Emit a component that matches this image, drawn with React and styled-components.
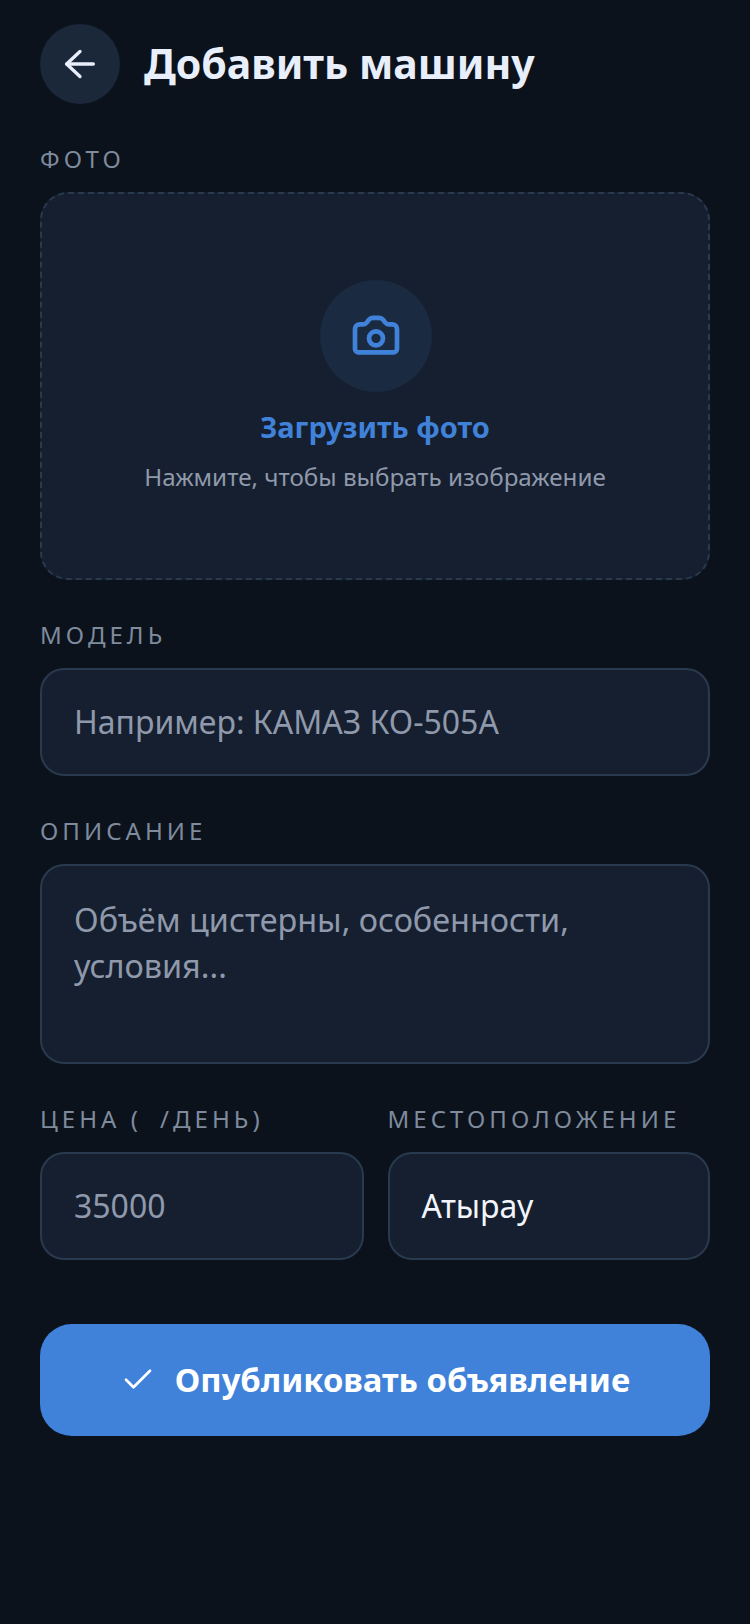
import React from "react";
import styled, { createGlobalStyle } from "styled-components";

const GlobalStyle = createGlobalStyle`
  html, body {
    margin: 0;
    padding: 0;
    background: #0b121c;
  }
  * { box-sizing: border-box; }
`;

const Page = styled.div`
  width: 750px;
  height: 1624px;
  padding: 24px 40px 0;
  background: #0b121c;
  font-family: "Noto Sans", sans-serif;
  color: #fff;
  overflow: hidden;
`;

const Header = styled.div`
  display: flex;
  align-items: center;
  gap: 24px;
  height: 80px;
`;

const BackButton = styled.div`
  width: 80px;
  height: 80px;
  border-radius: 50%;
  background: #1b283a;
  display: flex;
  align-items: center;
  justify-content: center;
`;

const Title = styled.h1`
  margin: 0 0 2px;
  font-size: 41px;
  line-height: 56px;
  font-weight: 700;
  color: #e8eefa;
`;

const Label = styled.div`
  font-size: 24px;
  line-height: 30px;
  letter-spacing: 4.05px;
  color: #7f8b9d;
  white-space: nowrap;
  margin-bottom: 18px;
`;

const LabelGap = styled.span`
  display: inline-block;
  width: 18px;
`;

const Section = styled.div`
  margin-top: 40px;
`;

const UploadBox = styled.div`
  height: 388px;
  border-radius: 28px;
  border: 2px dashed #2a3a4e;
  background: #151f2f;
  display: flex;
  flex-direction: column;
  align-items: center;
  justify-content: center;
`;

const CameraCircle = styled.div`
  width: 112px;
  height: 112px;
  margin-left: 2px;
  border-radius: 50%;
  background: #1a2a40;
  display: flex;
  align-items: center;
  justify-content: center;
`;

const UploadTitle = styled.div`
  margin-top: 16px;
  font-size: 29px;
  line-height: 38px;
  font-weight: 700;
  color: #4082d9;
`;

const UploadHint = styled.div`
  margin-top: 15px;
  font-size: 24.2px;
  line-height: 32px;
  color: #8f99ab;
`;

const Field = styled.div`
  height: ${(p) => p.$height || 108}px;
  border-radius: 24px;
  border: 2px solid #2a3a4e;
  background: #151f2f;
  padding: ${(p) => (p.$multi ? "30px 32px" : "0 32px")};
  display: flex;
  align-items: ${(p) => (p.$multi ? "flex-start" : "center")};
  font-size: ${(p) => (p.$multi ? 32.4 : 32)}px;
  line-height: ${(p) => (p.$multi ? 46 : 48)}px;
  color: ${(p) => (p.$filled ? "#f2f5fb" : "#8f99ab")};
`;

const Columns = styled.div`
  display: grid;
  grid-template-columns: 323.5px 322.5px;
  gap: 24px;
  margin-top: 40px;
`;

const SubmitButton = styled.div`
  margin-top: 64px;
  height: 112px;
  padding-bottom: 2px;
  border-radius: 32px;
  background: #4082d9;
  display: flex;
  align-items: center;
  justify-content: center;
  gap: 19px;
  font-size: 32.8px;
  font-weight: 700;
  color: #fff;
`;

export default function App() {
  return (
    <Page>
      <GlobalStyle />
      <Header>
        <BackButton>
          <svg width="40" height="40" viewBox="0 0 24 24" fill="none" stroke="#e8eefa" strokeWidth="2" strokeLinecap="round" strokeLinejoin="round">
            <path d="M20 12H4" />
            <path d="M12 4.5L4 12l8 7.5" />
          </svg>
        </BackButton>
        <Title>Добавить машину</Title>
      </Header>

      <Section>
        <Label>ФОТО</Label>
        <UploadBox>
          <CameraCircle>
            <svg width="56" height="56" viewBox="0 0 24 24" fill="none" stroke="#4082d9" strokeWidth="2" strokeLinecap="round" strokeLinejoin="round">
              <path d="M3 9a2 2 0 0 1 2-2h1.5a2 2 0 0 0 1.6-.8l.9-1.2a2 2 0 0 1 1.6-.8h2.8a2 2 0 0 1 1.6.8l.9 1.2a2 2 0 0 0 1.6.8H19a2 2 0 0 1 2 2v8.5a1.5 1.5 0 0 1-1.5 1.5h-15A1.5 1.5 0 0 1 3 17.5z" />
              <circle cx="12" cy="13" r="3" />
            </svg>
          </CameraCircle>
          <UploadTitle>Загрузить фото</UploadTitle>
          <UploadHint>Нажмите, чтобы выбрать изображение</UploadHint>
        </UploadBox>
      </Section>

      <Section>
        <Label>МОДЕЛЬ</Label>
        <Field>Например: КАМАЗ КО-505А</Field>
      </Section>

      <Section>
        <Label>ОПИСАНИЕ</Label>
        <Field $multi $height={200}>Объём цистерны, особенности, условия...</Field>
      </Section>

      <Columns>
        <div>
          <Label>ЦЕНА (<LabelGap />/ДЕНЬ)</Label>
          <Field>35000</Field>
        </div>
        <div>
          <Label>МЕСТОПОЛОЖЕНИЕ</Label>
          <Field $filled>Атырау</Field>
        </div>
      </Columns>

      <SubmitButton>
        <svg width="36" height="36" viewBox="0 0 24 24" fill="none" stroke="#fff" strokeWidth="1.8" strokeLinecap="round" strokeLinejoin="round">
          <path d="M4 12.5l5 5L20 6.5" />
        </svg>
        Опубликовать объявление
      </SubmitButton>
    </Page>
  );
}
